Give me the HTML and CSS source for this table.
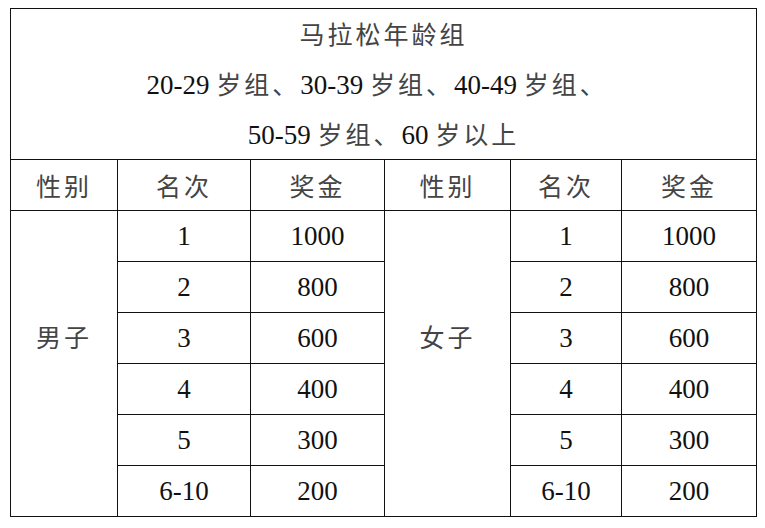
FILE: index.html
```html
<!DOCTYPE html>
<html lang="zh-CN">
<head>
<meta charset="utf-8">
<title>马拉松年龄组奖金</title>
<link rel="stylesheet" href="styles.css">
</head>
<body>
<table class="prize">
  <colgroup>
    <col class="c1"><col class="c2"><col class="c3"><col class="c4"><col class="c5"><col class="c6">
  </colgroup>
  <tr class="title-row">
    <td colspan="6" class="title">
      <div class="line"><span class="zh">马拉松年龄组</span></div>
      <div class="line shift">20-29 <span class="zh">岁组、</span>30-39 <span class="zh">岁组、</span>40-49 <span class="zh">岁组、</span></div>
      <div class="line">50-59 <span class="zh">岁组、</span>60 <span class="zh">岁以上</span></div>
    </td>
  </tr>
  <tr class="head">
    <td class="zh">性别</td><td class="zh">名次</td><td class="zh">奖金</td>
    <td class="zh">性别</td><td class="zh">名次</td><td class="zh">奖金</td>
  </tr>
  <tr>
    <td rowspan="6" class="zh gender">男子</td><td>1</td><td>1000</td>
    <td rowspan="6" class="zh gender">女子</td><td>1</td><td>1000</td>
  </tr>
  <tr><td>2</td><td>800</td><td>2</td><td>800</td></tr>
  <tr><td>3</td><td>600</td><td>3</td><td>600</td></tr>
  <tr><td>4</td><td>400</td><td>4</td><td>400</td></tr>
  <tr><td>5</td><td>300</td><td>5</td><td>300</td></tr>
  <tr><td>6-10</td><td>200</td><td>6-10</td><td>200</td></tr>
</table>
</body>
</html>
```
FILE: styles.css
```css
html, body {
  margin: 0;
  padding: 0;
  background: #fff;
}
body {
  padding: 8px 0 0 10px;
  font-family: "Liberation Serif", "Noto Sans CJK SC", serif;
  font-size: 27px;
  color: #111;
}
.prize {
  border-collapse: collapse;
  table-layout: fixed;
  width: 747px;
}
.c1 { width: 107px; }
.c2 { width: 133px; }
.c3 { width: 134px; }
.c4 { width: 126px; }
.c5 { width: 111px; }
.c6 { width: 135px; }
.prize td {
  border: 1px solid #111;
  text-align: center;
  vertical-align: middle;
  padding: 0;
  height: 50px;
  line-height: 30px;
}
.prize .title-row td {
  height: 147px;
}
.title .line {
  line-height: 48px;
}
.title .shift {
  padding-right: 13px;
}
.zh {
  font-family: "Noto Sans CJK SC", sans-serif;
  color: #444;
  font-size: 25px;
  letter-spacing: 3px;
}
.prize td.gender {
  vertical-align: top;
  padding-top: 110px;
}
```
